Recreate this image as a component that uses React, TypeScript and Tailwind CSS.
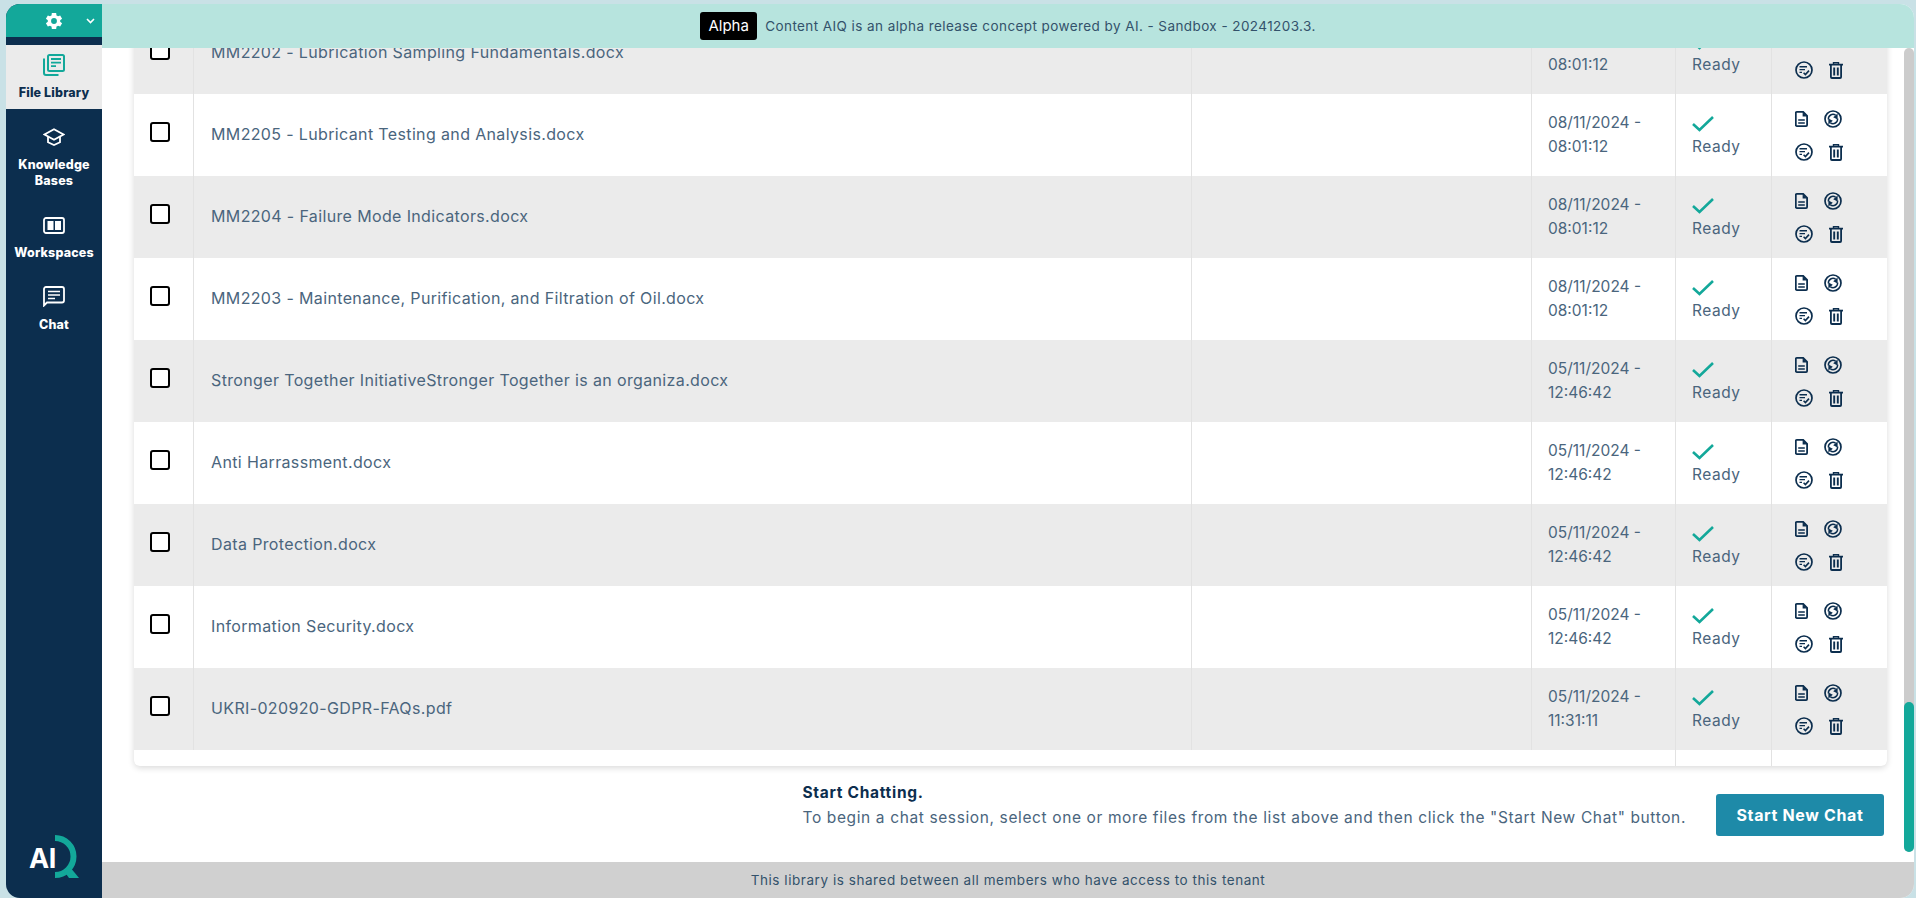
const FONT = "font-['Inter','Liberation_Sans',sans-serif]";

type Row = { name: string; date: string; time: string };

const rows: Row[] = [
  { name: "MM2202 - Lubrication Sampling Fundamentals.docx", date: "08/11/2024 -", time: "08:01:12" },
  { name: "MM2205 - Lubricant Testing and Analysis.docx", date: "08/11/2024 -", time: "08:01:12" },
  { name: "MM2204 - Failure Mode Indicators.docx", date: "08/11/2024 -", time: "08:01:12" },
  { name: "MM2203 - Maintenance, Purification, and Filtration of Oil.docx", date: "08/11/2024 -", time: "08:01:12" },
  { name: "Stronger Together InitiativeStronger Together is an organiza.docx", date: "05/11/2024 -", time: "12:46:42" },
  { name: "Anti Harrassment.docx", date: "05/11/2024 -", time: "12:46:42" },
  { name: "Data Protection.docx", date: "05/11/2024 -", time: "12:46:42" },
  { name: "Information Security.docx", date: "05/11/2024 -", time: "12:46:42" },
  { name: "UKRI-020920-GDPR-FAQs.pdf", date: "05/11/2024 -", time: "11:31:11" },
];

function DocIcon() {
  return (
    <svg width="13" height="16" viewBox="0 0 13 16" fill="none">
      <path d="M1.8 .9h6.4l3.9 3.9v9.3a1 1 0 0 1-1 1H1.8a1 1 0 0 1-1-1V1.9a1 1 0 0 1 1-1z" stroke="#0c2e4e" strokeWidth="1.8" />
      <path d="M7.6 1v4.4H12z" fill="#0c2e4e" />
      <path d="M3.2 9h6.6M3.2 12h6.6" stroke="#0c2e4e" strokeWidth="1.5" />
    </svg>
  );
}
function SyncIcon() {
  return (
    <svg width="18" height="18" viewBox="0 0 18 18" fill="none" stroke="#0c2e4e">
      <circle cx="9" cy="9" r="8" strokeWidth="1.7" />
      <path d="M4.4 9.4A4.6 4.6 0 0 1 11.6 5.2" strokeWidth="1.5" />
      <path d="M13.6 9.6 13.6 3.4 9.2 7.2z" fill="#0c2e4e" stroke="none" />
      <path d="M13.6 8.6A4.6 4.6 0 0 1 6.4 12.8" strokeWidth="1.5" />
      <path d="M4.4 8.4 4.4 14.6 8.8 10.8z" fill="#0c2e4e" stroke="none" />
    </svg>
  );
}
function ListCheckIcon() {
  return (
    <svg width="18" height="18" viewBox="0 0 18 18" fill="none" stroke="#0c2e4e">
      <circle cx="9" cy="9" r="8" strokeWidth="1.7" />
      <path d="M4.5 5.8h7.5M4.5 8.6h5.5M4.5 11.4h2.5" strokeWidth="1.4" />
      <path d="M8.6 11.8l1.8 1.8 3.6-4" strokeWidth="1.6" />
    </svg>
  );
}
function TrashIcon() {
  return (
    <svg width="14" height="17" viewBox="0 0 14 17" fill="none" stroke="#0c2e4e">
      <path d="M0 2.6h14" strokeWidth="1.8" />
      <path d="M4.5 2.2V.8h5v1.4" strokeWidth="1.4" />
      <path d="M1.9 3v12a1 1 0 0 0 1 1h8.2a1 1 0 0 0 1-1V3" strokeWidth="1.8" />
      <path d="M5.2 5.5v8M8.8 5.5v8" strokeWidth="1.9" />
    </svg>
  );
}
function Check() {
  return (
    <svg width="22" height="16" viewBox="0 0 22 16" fill="none">
      <path d="M1 8l6.5 6L21 1" stroke="#13a89a" strokeWidth="2.6" />
    </svg>
  );
}

function TableRow({ row, even }: { row: Row; even: boolean }) {
  return (
    <div className={`flex h-[82px] text-[#4a657d] ${even ? "bg-white" : "bg-[#ebebeb]"}`}>
      <div className="w-[60px] shrink-0 border-r border-[#e2e2e2] pl-[16px] pt-[28px]">
        <div className="h-[20px] w-[20px] rounded-[3px] border-2 border-black bg-white" />
      </div>
      <div className="w-[998px] shrink-0 border-r border-[#e2e2e2] pl-[17px] pt-[30px] text-[16px] leading-[20px] tracking-[0.36px]">{row.name}</div>
      <div className="w-[340px] shrink-0 border-r border-[#e2e2e2]" />
      <div className="w-[144px] shrink-0 border-r border-[#e2e2e2] pl-[16px] pt-[17px] text-[15.5px] leading-[24px]">
        <div>{row.date}</div>
        <div>{row.time}</div>
      </div>
      <div className="w-[96px] shrink-0 border-r border-[#e2e2e2] pl-[16px] pt-[22px] text-[15.5px] leading-[24px] tracking-[0.5px]">
        <Check />
        <div className="mt-[3px]">Ready</div>
      </div>
      <div className="min-w-0 flex-1 pl-[23px] pt-[16px]">
        <div className="flex h-[18px] items-center">
          <div className="flex w-[29px] justify-start"><DocIcon /></div>
          <SyncIcon />
        </div>
        <div className="mt-[15px] flex h-[18px] items-center">
          <div className="flex w-[34px] justify-start"><ListCheckIcon /></div>
          <TrashIcon />
        </div>
      </div>
    </div>
  );
}

const navLabel = "text-center text-[12.5px] font-extrabold leading-[16px] tracking-[0.15px]";

export default function App() {
  return (
    <div className={`${FONT} flex h-[898px] w-[1916px] overflow-hidden bg-[#c9e1e6] pl-[6px] pr-[2px] pt-[4px]`}>
      <aside className="flex w-[96px] shrink-0 flex-col overflow-hidden rounded-l-[14px] bg-[#0c2e4e]">
        <div className="flex h-[33px] shrink-0 items-center justify-end bg-[#13a89a] pr-[7px] text-white">
          <svg className="mr-[22px]" width="20" height="20" viewBox="0 0 24 24" fill="#fff">
            <path d="M19.4 13a7.5 7.5 0 0 0 0-2l2.3-1.7-2.3-4-2.6 1.1a7.6 7.6 0 0 0-1.8-1L14.6 2.5h-5.2L9 5.4a7.6 7.6 0 0 0-1.8 1L4.6 5.3l-2.3 4L4.6 11a7.5 7.5 0 0 0 0 2l-2.3 1.7 2.3 4 2.6-1.1a7.6 7.6 0 0 0 1.8 1l.4 2.9h5.2l.4-2.9a7.6 7.6 0 0 0 1.8-1l2.6 1.1 2.3-4zM12 15.5a3.5 3.5 0 1 1 0-7 3.5 3.5 0 0 1 0 7z" />
          </svg>
          <svg width="9" height="6" viewBox="0 0 9 6" fill="none" stroke="#fff" strokeWidth="1.6"><path d="M1 1l3.5 3.5L8 1" /></svg>
        </div>
        <nav className="mt-[8px] flex flex-col items-stretch text-white">
          <div className="flex h-[64px] flex-col items-center bg-[#ebebeb] pt-[9px] text-[#0c2e4e]">
            <svg width="22" height="22" viewBox="0 0 22 22" fill="none" stroke="#13a89a" strokeWidth="2">
              <rect x="5" y="1" width="16" height="16" rx="1.5" />
              <path d="M1 4.5V19a2 2 0 0 0 2 2h12.5" />
              <path d="M8 5h10M8 8.6h10M8 12.2h5" strokeWidth="1.8" />
            </svg>
            <div className={`mt-[9px] ${navLabel}`}>File Library</div>
          </div>
          <div className="mt-[19px] flex flex-col items-center">
            <svg width="22" height="18" viewBox="0 0 22 18" fill="none" stroke="#fff" strokeWidth="1.8">
              <path d="M11 1.2L1.5 6.5 11 11.8l9.5-5.3z" />
              <path d="M5 9v5.2L11 17l6-2.8V9" />
            </svg>
            <div className={`mt-[11px] ${navLabel}`}>Knowledge<br />Bases</div>
          </div>
          <div className="mt-[28px] flex flex-col items-center">
            <svg width="22" height="17" viewBox="0 0 22 17" fill="none">
              <rect x="1" y="1" width="20" height="15" rx="2" stroke="#fff" strokeWidth="1.8" />
              <rect x="4.5" y="4" width="6" height="9" fill="#fff" />
              <rect x="12" y="4" width="6" height="9" fill="#fff" />
            </svg>
            <div className={`mt-[11px] ${navLabel}`}>Workspaces</div>
          </div>
          <div className="mt-[25px] flex flex-col items-center">
            <svg width="22" height="21" viewBox="0 0 22 21" fill="none" stroke="#fff" strokeWidth="1.8">
              <path d="M1 19.5V3a2 2 0 0 1 2-2h16a2 2 0 0 1 2 2v11.5a2 2 0 0 1-2 2H4z" />
              <path d="M5 5.5h12M5 9h12M5 12.5h7" strokeWidth="1.6" />
            </svg>
            <div className={`mt-[10px] ${navLabel}`}>Chat</div>
          </div>
        </nav>
        <div className="mt-auto flex justify-center pb-[20px]">
          <div className="relative flex h-[43px] w-[48px] items-center">
            <span className="-ml-[1px] mt-[3px] text-[27px] font-bold leading-none tracking-[-0.5px] text-white">AI</span>
            <svg className="absolute left-[25px] top-0" width="24" height="43" viewBox="0 0 24 43" fill="none">
              <path d="M0 3A18.5 18.5 0 0 1 0 40" stroke="#13a89a" strokeWidth="6" />
              <path d="M9 36l6-4 9 11h-10z" fill="#13a89a" />
            </svg>
          </div>
        </div>
      </aside>
      <main className="flex min-w-0 flex-1 flex-col overflow-hidden rounded-r-[14px] bg-white">
        <header className="z-10 flex h-[44px] shrink-0 items-center justify-center bg-[#b7e4de] text-[13.5px] tracking-[0.42px] text-[#33526b]">
          <span className="mr-[8px] flex h-[28px] w-[57px] items-center justify-center rounded-[3px] bg-black text-[15px] tracking-normal text-white">Alpha</span>
          <span>Content AIQ is an alpha release concept powered by AI. - Sandbox - 20241203.3.</span>
        </header>
        <div className="flex min-h-0 flex-1">
          <div className="flex min-w-0 flex-1 flex-col overflow-hidden">
            <div className="h-[730px] shrink-0 overflow-hidden">
              <div className="-mt-[36px] ml-[32px] w-[1753px] overflow-hidden rounded-b-[6px] bg-white shadow-[0_2px_6px_rgba(0,0,0,0.15)]">
                {rows.map((r, i) => (
                  <TableRow key={r.name} row={r} even={i % 2 === 1} />
                ))}
                <div className="flex h-[16px]">
                  <div className="w-[1398px] shrink-0" />
                  <div className="w-[144px] shrink-0 border-r border-[#e2e2e2]" />
                  <div className="w-[96px] shrink-0 border-r border-[#e2e2e2]" />
                </div>
              </div>
            </div>
            <div className="flex min-h-0 flex-1 items-start justify-end pr-[20px] pt-[3px]">
              <div className="mr-[30px] text-[15.5px] leading-[24.5px] tracking-[0.62px] text-[#4a657d]">
                <div className="font-bold tracking-[0.7px] text-[#0c2e4e]">Start Chatting.</div>
                <div>To begin a chat session, select one or more files from the list above and then click the "Start New Chat" button.</div>
              </div>
              <button className="mt-[13px] h-[42px] w-[168px] rounded-[3px] bg-[#1e8aa8] text-[16px] font-bold tracking-[0.65px] text-white">Start New Chat</button>
            </div>
          </div>
          <div className="flex h-[804px] w-[10px] shrink-0 flex-col justify-end rounded-[5px] bg-[#cccccc]">
            <div className="h-[150px] rounded-[5px] bg-[#13a89a]" />
          </div>
        </div>
        <footer className="flex h-[36px] shrink-0 items-center justify-center bg-[#d0d0d0] text-[13.5px] tracking-[0.55px] text-[#33526b]">
          This library is shared between all members who have access to this tenant
        </footer>
      </main>
    </div>
  );
}
